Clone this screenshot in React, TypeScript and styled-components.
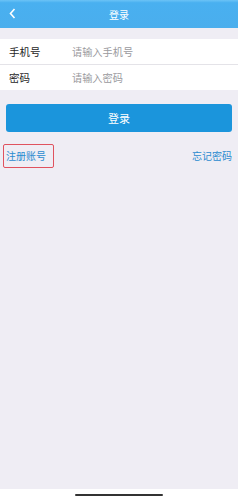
import styled, { createGlobalStyle } from 'styled-components';

const GlobalStyle = createGlobalStyle`
   html, body {
      margin: 0;
      padding: 0;
      background: #ffffff;
   }
   body {
      font-family: "Noto Sans CJK SC", "Noto Sans", sans-serif;
   }
`;

const Page = styled.div`
   width: 238px;
   height: 500px;
   display: flex;
   flex-direction: column;
   background: #ffffff;
`;

const Screen = styled.div`
   flex: 0 0 489px;
   display: flex;
   flex-direction: column;
   background: #efedf4;
`;

const Header = styled.div`
   position: relative;
   height: 28px;
   display: flex;
   align-items: center;
   justify-content: center;
   background: linear-gradient(180deg, #6cc3f6 0%, #49b0f0 10%, #4aaeed 100%);
   color: #ffffff;
   font-size: 10px;
`;

const BackButton = styled.span`
   position: absolute;
   left: 9px;
   top: 8px;
   display: flex;
`;

const Form = styled.div`
   margin-top: 11px;
   background: #ffffff;
   display: flex;
   flex-direction: column;
`;

const Row = styled.div<{ last?: boolean }>`
   height: 25px;
   display: flex;
   align-items: center;
   padding-left: 9px;
   border-bottom: ${props => (props.last ? 'none' : '1px solid #e4e3e8')};
`;

const Label = styled.span`
   width: 63px;
   font-size: 10.5px;
   color: #1e1e1e;
`;

const Placeholder = styled.span`
   font-size: 10.2px;
   color: #9a9a9e;
`;

const Submit = styled.div`
   margin: 14px 6px 0;
   height: 28px;
   border-radius: 3px;
   background: #1b95dc;
   color: #ffffff;
   font-size: 11px;
   display: flex;
   align-items: center;
   justify-content: center;
`;

const Links = styled.div`
   margin-top: 12px;
   padding: 0 6px 0 3px;
   display: flex;
   justify-content: space-between;
   align-items: center;
`;

const LinkText = styled.span<{ boxed?: boolean }>`
   font-size: 10px;
   line-height: 14px;
   color: #2a8bd0;
   padding: ${props => (props.boxed ? '4px 7px 4px 2px' : '0')};
   border: ${props => (props.boxed ? '1px solid #e0525e' : 'none')};
   border-radius: 2px;
`;

const HomeBar = styled.div`
   flex: 1;
   display: flex;
   justify-content: center;
   align-items: center;
`;

const Indicator = styled.div`
   width: 88px;
   height: 2px;
   border-radius: 1px;
   background: #333333;
`;

export default function App() {
   return (
      <Page>
         <GlobalStyle />
         <Screen>
            <Header>
               <BackButton>
                  <svg width="7" height="11" viewBox="0 0 7 11">
                     <path d="M5.5 1 L1.5 5.5 L5.5 10" fill="none" stroke="#ffffff" strokeWidth="1.6" />
                  </svg>
               </BackButton>
               登录
            </Header>
            <Form>
               <Row>
                  <Label>手机号</Label>
                  <Placeholder>请输入手机号</Placeholder>
               </Row>
               <Row last>
                  <Label>密码</Label>
                  <Placeholder>请输入密码</Placeholder>
               </Row>
            </Form>
            <Submit>登录</Submit>
            <Links>
               <LinkText boxed>注册账号</LinkText>
               <LinkText>忘记密码</LinkText>
            </Links>
         </Screen>
         <HomeBar>
            <Indicator />
         </HomeBar>
      </Page>
   );
}
